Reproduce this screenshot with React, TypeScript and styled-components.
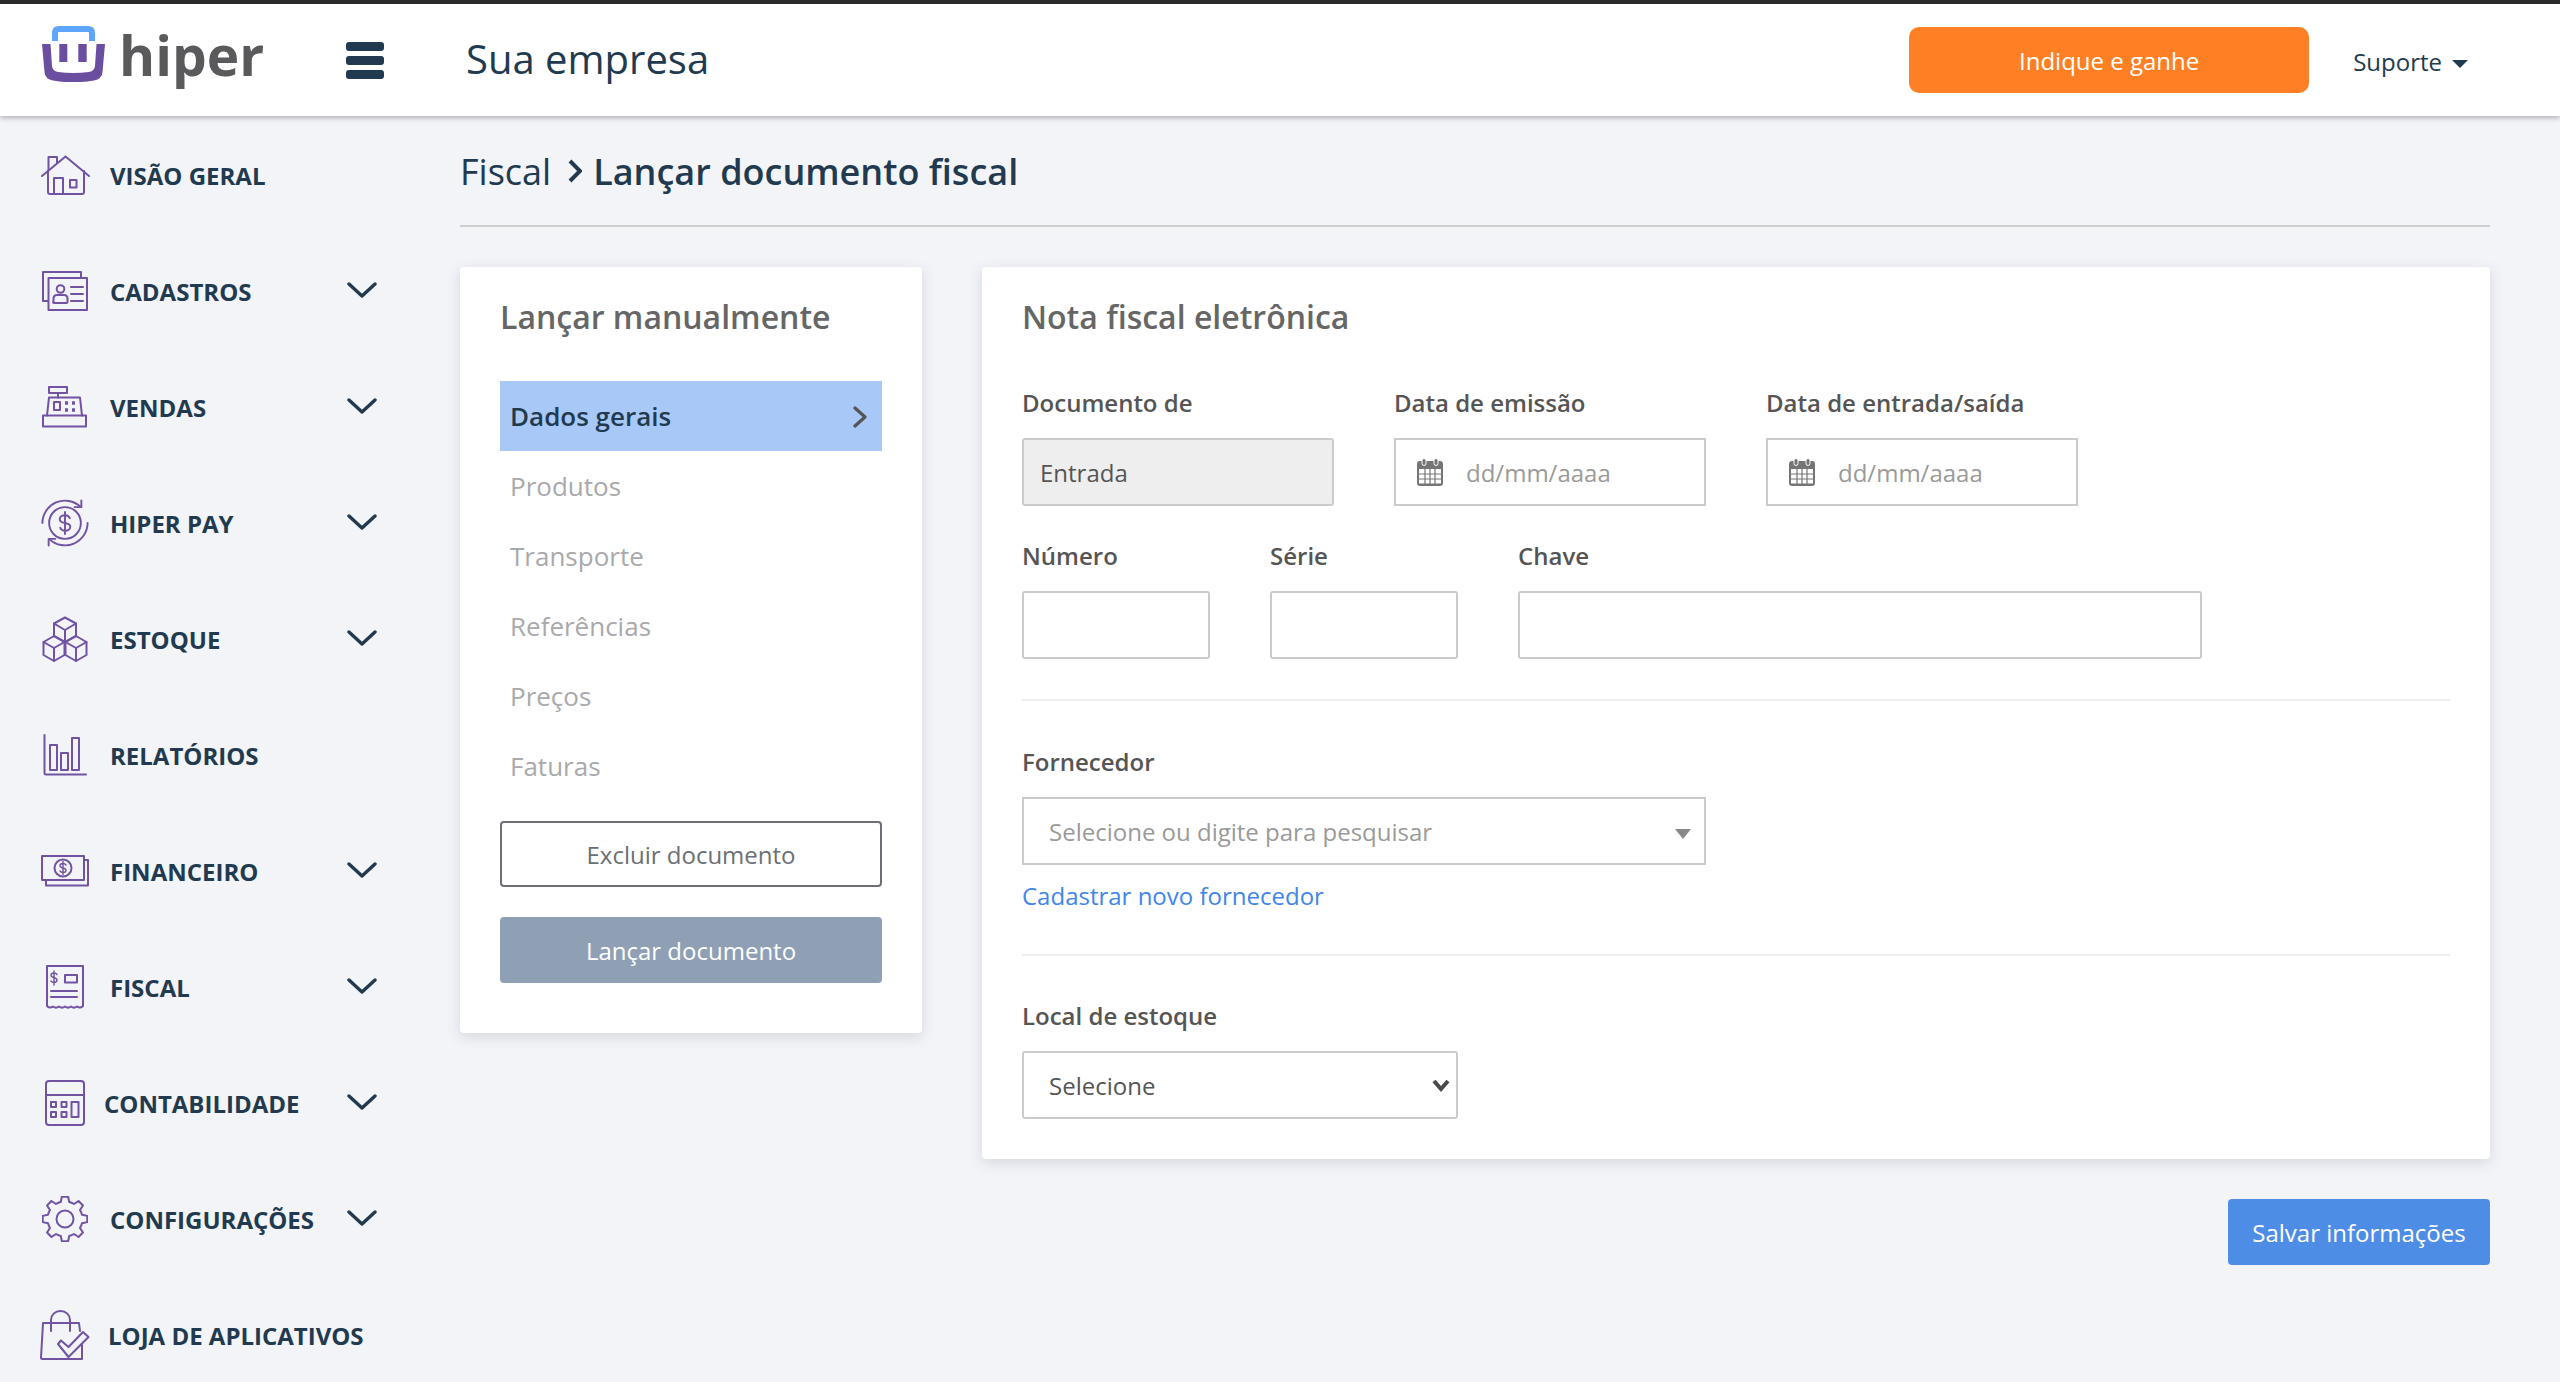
import React from "react";
import styled, { createGlobalStyle } from "styled-components";

const GlobalStyle = createGlobalStyle`
  html, body {
    margin: 0;
    padding: 0;
    height: 100%;
    background: #f2f4f8;
    font-family: "Open Sans", "Noto Sans", sans-serif;
    overflow: hidden;
  }
  * {
    box-sizing: border-box;
  }
`;

const Page = styled.div`
  width: 2560px;
  height: 1382px;
  overflow: hidden;
  display: flex;
  flex-direction: column;
`;

/* top bar */
const Topbar = styled.header`
  height: 116px;
  flex: none;
  background: #fff;
  border-top: 4px solid #2b2b2d;
  box-shadow: 0 2px 5px rgba(0, 0, 0, 0.28);
  display: flex;
  align-items: center;
  padding-left: 42px;
  padding-right: 92px;
  position: relative;
  z-index: 2;
`;

const Brand = styled.div`
  display: flex;
  align-items: center;
  gap: 14px;
  width: 304px;
  height: 100%;
  padding-bottom: 12px;
`;

const LogoSvg = styled.svg`
  width: 63px;
  height: 56px;
  flex: none;
`;

const BrandName = styled.span`
  font-size: 55px;
  line-height: 1;
  font-weight: 700;
  color: #5a5a5c;
`;

const Burger = styled.div`
  width: 38px;
  display: flex;
  flex-direction: column;
  gap: 5px;
  margin-right: 82px;
  span {
    display: block;
    height: 9px;
    border-radius: 3px;
    background: #223a4f;
  }
`;

const CompanyName = styled.div`
  font-size: 40px;
  color: #223a4f;
  flex: 1;
  margin-top: -4px;
`;

const ReferButton = styled.button`
  width: 400px;
  height: 66px;
  border: none;
  border-radius: 10px;
  background: #ff7f24;
  color: #fff;
  font: 400 24px "Open Sans", sans-serif;
`;

const SupportMenu = styled.div`
  margin-left: 44px;
  display: flex;
  align-items: center;
  gap: 10px;
  font-size: 24px;
  color: #223a4f;
  margin-top: 2px;
`;

const Caret = styled.span`
  width: 0;
  height: 0;
  margin-top: 5px;
  border-left: 8px solid transparent;
  border-right: 8px solid transparent;
  border-top: 8px solid #223a4f;
`;

/* body */
const Body = styled.div`
  flex: 1;
  display: flex;
  min-height: 0;
`;

const Sidebar = styled.nav`
  width: 460px;
  flex: none;
  padding-top: 1px;
`;

const MenuRow = styled.div`
  height: 116px;
  display: flex;
  align-items: center;
  padding-left: 40px;
  position: relative;
`;

const MenuIcon = styled.div`
  width: 50px;
  display: flex;
  justify-content: center;
  align-items: center;
  flex: none;
  svg {
    display: block;
    fill: none;
    stroke: #7152a3;
    stroke-width: 2;
    stroke-linejoin: round;
    stroke-linecap: round;
  }
`;

const MenuLabel = styled.span<{ $offset?: number }>`
  font-size: 24px;
  font-weight: 700;
  color: #223a4f;
  margin-left: ${(p) => p.$offset ?? 20}px;
  white-space: nowrap;
`;

const MenuChevron = styled.svg`
  position: absolute;
  left: 347px;
  top: 48px;
  width: 30px;
  height: 18px;
  fill: none;
  stroke: #223a4f;
  stroke-width: 3.4;
  stroke-linecap: round;
  stroke-linejoin: round;
`;

const Main = styled.main`
  flex: 1;
  padding: 0 70px 0 0;
  min-width: 0;
`;

const Breadcrumb = styled.div`
  height: 111px;
  display: flex;
  align-items: center;
  border-bottom: 2px solid #cdcecd;
  font-size: 36px;
  color: #223a4f;
  padding-top: 1px;
`;

const CrumbSeparator = styled.svg`
  width: 15px;
  height: 24px;
  margin: 0 11px 0 16px;
  fill: none;
  stroke: #223a4f;
  stroke-width: 4;
`;

const CrumbCurrent = styled.span`
  font-weight: 600;
`;

const Columns = styled.div`
  display: flex;
  align-items: flex-start;
  gap: 60px;
  margin-top: 40px;
`;

const Card = styled.section`
  background: #fff;
  border-radius: 4px;
  box-shadow: 0 4px 14px rgba(60, 70, 90, 0.16);
`;

const StepsCard = styled(Card)`
  width: 462px;
  height: 766px;
  padding: 28px 40px 0;
  flex: none;
`;

const FormCard = styled(Card)`
  flex: 1;
  height: 892px;
  padding: 28px 40px 0;
`;

const CardTitle = styled.h2`
  margin: 0;
  font-size: 32px;
  line-height: 44px;
  font-weight: 600;
  color: #666;
`;

const Steps = styled.ul`
  list-style: none;
  margin: 42px 0 0;
  padding: 0;
`;

const Step = styled.li<{ $active?: boolean }>`
  height: 70px;
  padding: 0 15px 0 10px;
  display: flex;
  align-items: center;
  justify-content: space-between;
  font-size: 26px;
  font-weight: ${(p) => (p.$active ? 600 : 400)};
  color: ${(p) => (p.$active ? "#223a4f" : "#a9a9ab")};
  background: ${(p) => (p.$active ? "#a8c8f8" : "transparent")};
`;

const StepChevron = styled.svg`
  width: 14px;
  height: 24px;
  margin-top: 2px;
  fill: none;
  stroke: #555;
  stroke-width: 3.2;
  stroke-linecap: round;
  stroke-linejoin: round;
`;

const StepActions = styled.div`
  margin-top: 20px;
  display: flex;
  flex-direction: column;
  gap: 30px;
`;

const OutlineButton = styled.button`
  height: 66px;
  border: 2px solid #6c6f75;
  border-radius: 4px;
  background: #fff;
  color: #6c6f75;
  font: 400 24px "Open Sans", sans-serif;
`;

const MutedButton = styled.button`
  height: 66px;
  border: none;
  border-radius: 4px;
  background: #8fa0b5;
  color: #fff;
  font: 400 24px "Open Sans", sans-serif;
`;

const FieldRow = styled.div<{ $top: number }>`
  display: flex;
  gap: 60px;
  margin-top: ${(p) => p.$top}px;
`;

const Field = styled.div<{ $width: number }>`
  width: ${(p) => p.$width}px;
  flex: none;
`;

const Label = styled.div`
  font-size: 24px;
  line-height: 34px;
  font-weight: 600;
  color: #555;
  margin-bottom: 18px;
`;

const InputBox = styled.div<{ $disabled?: boolean; $square?: boolean; $inset?: number }>`
  height: 68px;
  border: 2px solid #cbcbcb;
  border-radius: ${(p) => (p.$square ? 0 : 3)}px;
  background: ${(p) => (p.$disabled ? "#eeeeee" : "#fff")};
  color: #555;
  font-size: 24px;
  display: flex;
  align-items: center;
  padding-left: ${(p) => p.$inset ?? 16}px;
  gap: 23px;
  position: relative;
`;

const Placeholder = styled.span`
  color: #9a9a9a;
`;

const CalendarSvg = styled.svg`
  width: 26px;
  height: 28px;
  flex: none;
  margin-left: 5px;
`;

const Divider = styled.hr`
  border: none;
  border-top: 2px solid #eeeeee;
  margin: 40px 0 0;
`;

const SelectArrow = styled.span`
  position: absolute;
  right: 13px;
  top: 30px;
  width: 0;
  height: 0;
  border-left: 8px solid transparent;
  border-right: 8px solid transparent;
  border-top: 10px solid #888;
`;

const NativeChevron = styled.svg`
  position: absolute;
  right: 5px;
  top: 26px;
  width: 20px;
  height: 14px;
  fill: none;
  stroke: #4a4a4a;
  stroke-width: 4;
`;

const LinkText = styled.a`
  display: block;
  margin-top: 13px;
  font-size: 24px;
  line-height: 36px;
  color: #3f86e8;
`;

const Footer = styled.div`
  display: flex;
  justify-content: flex-end;
  margin-top: 40px;
`;

const SaveButton = styled.button`
  width: 262px;
  height: 66px;
  border: none;
  border-radius: 4px;
  background: #4e8de6;
  color: #fff;
  font: 400 24px "Open Sans", sans-serif;
`;

/* drawings */
const LogoMark = () => (
  <LogoSvg viewBox="0 0 63 56">
    <path d="M13 15V7q0-4 4-4h29q4 0 4 4v8" fill="none" stroke="#5ea5ff" strokeWidth="6" />
    <path
      d="M0 18h8.500L10 40q.5 5 6 6 15 2 31 0 5.500-1 6-6l1.500-22H63l-2.500 28q-.5 7-8.500 8.500-21 3.500-41 0-8-1.500-8.500-8.500z"
      fill="#6b4e9f"
    />
    <rect x="17.300" y="18" width="8" height="18" fill="#6b4e9f" />
    <rect x="36.300" y="18" width="8.400" height="18" fill="#6b4e9f" />
  </LogoSvg>
);

const HomeIcon = () => (
  <svg width="49" height="40" viewBox="0 0 49 40">
    <path d="M1 21 24.500 1.500 48 21" />
    <path d="M7.500 15V2h8.500v6" />
    <path d="M7 16v21c0 1 1 2 2 2h13V23h-9v16M22 39h19c1 0 2-1 2-2V16" />
    <rect x="29" y="25" width="6.500" height="7.500" />
  </svg>
);

const CardsIcon = () => (
  <svg width="46" height="40" viewBox="0 0 46 40">
    <path d="M6 30H1V1h38v6" />
    <rect x="6.500" y="7" width="38.500" height="32" />
    <circle cx="18.500" cy="18" r="3.800" />
    <path d="M11.500 31v-3.500c0-2 1.500-3.500 3.500-3.500h7c2 0 3.500 1.500 3.500 3.500V31c0 .5-.5 1-1 1h-12.500c-.5 0-1-.5-1-1z" />
    <path d="M29 16h12M29 23h12M29 30h12" />
  </svg>
);

const RegisterIcon = () => (
  <svg width="46" height="42" viewBox="0 0 46 42">
    <rect x="1" y="29.500" width="43" height="11" />
    <path d="M5 29.500 7 11.500h31l2 18" />
    <rect x="7" y="1" width="18" height="6" />
    <path d="M16 7v4.500" />
    <rect x="12" y="16" width="6" height="8" />
    <path d="M23 17h3M30 17h3M23 24h3M30 24h3" strokeWidth="3.400" strokeLinecap="butt" />
  </svg>
);

const PayIcon = () => (
  <svg width="52" height="50" viewBox="0 0 52 50">
    <path d="M2.500 25A23.500 23.500 0 0 1 42 8M49.500 25A23.500 23.500 0 0 1 10 42" />
    <path d="M43 1.500V8.500H36M9 48.500V41.500H16" />
    <circle cx="26" cy="25" r="16.500" />
    <path d="M31 20c-1-2-3-3-5-3-3 0-5.500 1.500-5.500 4s2.500 3.500 5.500 4 5.500 1.500 5.500 4-2.500 4-5.500 4c-2 0-4-1-5-3M26 13.500v23" />
  </svg>
);

const BoxesIcon = () => (
  <svg width="46" height="46" viewBox="0 0 46 46">
    <path d="M23 1.500 34 7.500v12.500l-11 6-11-6V7.500z" />
    <path d="M12 7.500 23 14l11-6.500M23 14v12" />
    <path d="M12 20 22.500 26v13L12 45 1.500 39V26z" />
    <path d="M1.500 26 12 32l10.500-6M12 32v13" />
    <path d="M34 20 44.500 26v13L34 45l-10.500-6V26z" />
    <path d="M23.500 26 34 32l10.500-6M34 32v13" />
  </svg>
);

const ChartIcon = () => (
  <svg width="44" height="42" viewBox="0 0 44 42">
    <path d="M1.500 1v38c0 1 .5 1.500 1.500 1.500h40" />
    <rect x="7" y="11" width="7" height="25" />
    <rect x="18" y="19" width="7" height="17" />
    <rect x="29" y="4" width="7" height="32" />
  </svg>
);

const MoneyIcon = () => (
  <svg width="48" height="32" viewBox="0 0 48 32">
    <rect x="1" y="1" width="42" height="24" />
    <path d="M5 25v5.500h42V5h-4" />
    <circle cx="22" cy="13" r="8.500" />
    <path d="M25 10c-.7-1-1.800-1.500-3-1.500-1.800 0-3 .9-3 2.200s1.200 1.900 3 2.300 3 1 3 2.300-1.200 2.200-3 2.200c-1.200 0-2.300-.5-3-1.500M22 6.500v13" strokeWidth="1.400" />
  </svg>
);

const ReceiptIcon = () => (
  <svg width="40" height="44" viewBox="0 0 40 44">
    <path d="M2 1h36v40c-2 2-4 2-6 .5-2 1.500-4 1.500-6 0-2 1.500-4 1.500-6 0-2 1.500-4 1.500-6 0-2 1.500-4 1.500-6 0-2 1.500-4 1.500-6-.5z" />
    <rect x="20" y="10" width="12" height="7.500" />
    <path d="M12 9.500c-.7-1-1.700-1.500-3-1.500-1.800 0-3 1-3 2.300s1.200 2 3 2.400 3 1.100 3 2.400S10.800 17.500 9 17.500c-1.300 0-2.300-.5-3-1.500M9 6v14" strokeWidth="1.400" />
    <path d="M6 26h26M6 32h26" />
  </svg>
);

const LedgerIcon = () => (
  <svg width="40" height="46" viewBox="0 0 40 46">
    <rect x="1" y="1" width="38" height="44" rx="3" />
    <path d="M1 15h38" />
    <rect x="6" y="22" width="5" height="5" />
    <rect x="16.500" y="22" width="5" height="5" />
    <rect x="6" y="32" width="5" height="5" />
    <rect x="16.500" y="32" width="5" height="5" />
    <rect x="26.500" y="22" width="7" height="15" />
  </svg>
);

const gearPath = () => {
  const at = (r: number, deg: number) => {
    const a = (deg * Math.PI) / 180;
    return `${(23 + r * Math.cos(a)).toFixed(2)} ${(23 + r * Math.sin(a)).toFixed(2)}`;
  };
  const inner = 17.5;
  const outer = 22.5;
  let d = `M${at(inner, -14)}`;
  for (let i = 0; i < 8; i++) {
    const c = i * 45;
    d += `L${at(outer, c - 8)}L${at(outer, c + 8)}L${at(inner, c + 14)}`;
    d += `A${inner} ${inner} 0 0 1 ${at(inner, c + 31)}`;
  }
  return d + "Z";
};

const GearIcon = () => (
  <svg width="46" height="46" viewBox="0 0 46 46">
    <path d={gearPath()} />
    <circle cx="23" cy="23" r="8.500" />
  </svg>
);

const BagIcon = () => (
  <svg width="50" height="50" viewBox="0 0 50 50">
    <path d="M27 49H2.500c-1 0-1.500-.5-1.500-1.500L3 13h36l1 8" />
    <path d="M27 49h15V35" />
    <path d="M11 21V10c0-5 4-9 9.500-9S30 5 30 10v11" />
    <path d="M18 34 21 30.500l7.500 6.500L43 22l5.500 5-20 20z" />
  </svg>
);

const CalendarGlyph = () => (
  <CalendarSvg viewBox="0 0 26 28">
    <rect x="0" y="3" width="26" height="25" rx="3" fill="#757575" />
    <path d="M2 11h22v14.500H2z" fill="#fff" />
    <path d="M2 16h22M2 21h22M8 11v15M13 11v15M18 11v15" stroke="#757575" strokeWidth="1.200" />
    <rect x="5" y="0.500" width="4" height="7" rx="2" fill="#757575" stroke="#fff" strokeWidth="1" />
    <rect x="17" y="0.500" width="4" height="7" rx="2" fill="#757575" stroke="#fff" strokeWidth="1" />
  </CalendarSvg>
);

const ChevronDown = () => (
  <MenuChevron viewBox="0 0 30 18">
    <path d="M2 3 15 15 28 3" />
  </MenuChevron>
);

const menu = [
  { label: "VISÃO GERAL", icon: <HomeIcon />, arrow: false },
  { label: "CADASTROS", icon: <CardsIcon />, arrow: true },
  { label: "VENDAS", icon: <RegisterIcon />, arrow: true },
  { label: "HIPER PAY", icon: <PayIcon />, arrow: true },
  { label: "ESTOQUE", icon: <BoxesIcon />, arrow: true },
  { label: "RELATÓRIOS", icon: <ChartIcon />, arrow: false },
  { label: "FINANCEIRO", icon: <MoneyIcon />, arrow: true },
  { label: "FISCAL", icon: <ReceiptIcon />, arrow: true },
  { label: "CONTABILIDADE", icon: <LedgerIcon />, arrow: true, offset: 14 },
  { label: "CONFIGURAÇÕES", icon: <GearIcon />, arrow: true },
  { label: "LOJA DE APLICATIVOS", icon: <BagIcon />, arrow: false, offset: 18 },
];

const steps = ["Dados gerais", "Produtos", "Transporte", "Referências", "Preços", "Faturas"];

const App = () => {
  return (
    <Page>
      <GlobalStyle />
      <Topbar>
        <Brand>
          <LogoMark />
          <BrandName>hiper</BrandName>
        </Brand>
        <Burger>
          <span />
          <span />
          <span />
        </Burger>
        <CompanyName>Sua empresa</CompanyName>
        <ReferButton>Indique e ganhe</ReferButton>
        <SupportMenu>
          Suporte
          <Caret />
        </SupportMenu>
      </Topbar>

      <Body>
        <Sidebar>
          {menu.map((item) => (
            <MenuRow key={item.label}>
              <MenuIcon>{item.icon}</MenuIcon>
              <MenuLabel $offset={item.offset}>{item.label}</MenuLabel>
              {item.arrow && <ChevronDown />}
            </MenuRow>
          ))}
        </Sidebar>

        <Main>
          <Breadcrumb>
            Fiscal
            <CrumbSeparator viewBox="0 0 15 24">
              <path d="M3 2 13 12 3 22" />
            </CrumbSeparator>
            <CrumbCurrent>Lançar documento fiscal</CrumbCurrent>
          </Breadcrumb>

          <Columns>
            <StepsCard>
              <CardTitle>Lançar manualmente</CardTitle>
              <Steps>
                {steps.map((step, i) => (
                  <Step key={step} $active={i === 0}>
                    {step}
                    {i === 0 && (
                      <StepChevron viewBox="0 0 14 24">
                        <path d="M2 3 12 12 2 21" />
                      </StepChevron>
                    )}
                  </Step>
                ))}
              </Steps>
              <StepActions>
                <OutlineButton>Excluir documento</OutlineButton>
                <MutedButton>Lançar documento</MutedButton>
              </StepActions>
            </StepsCard>

            <FormCard>
              <CardTitle>Nota fiscal eletrônica</CardTitle>
              <FieldRow $top={47}>
                <Field $width={312}>
                  <Label>Documento de</Label>
                  <InputBox $disabled>Entrada</InputBox>
                </Field>
                <Field $width={312}>
                  <Label>Data de emissão</Label>
                  <InputBox $square>
                    <CalendarGlyph />
                    <Placeholder>dd/mm/aaaa</Placeholder>
                  </InputBox>
                </Field>
                <Field $width={312}>
                  <Label>Data de entrada/saída</Label>
                  <InputBox $square>
                    <CalendarGlyph />
                    <Placeholder>dd/mm/aaaa</Placeholder>
                  </InputBox>
                </Field>
              </FieldRow>
              <FieldRow $top={33}>
                <Field $width={188}>
                  <Label>Número</Label>
                  <InputBox />
                </Field>
                <Field $width={188}>
                  <Label>Série</Label>
                  <InputBox />
                </Field>
                <Field $width={684}>
                  <Label>Chave</Label>
                  <InputBox />
                </Field>
              </FieldRow>
              <Divider />
              <FieldRow $top={44}>
                <Field $width={684}>
                  <Label>Fornecedor</Label>
                  <InputBox $square $inset={25}>
                    <Placeholder>Selecione ou digite para pesquisar</Placeholder>
                    <SelectArrow />
                  </InputBox>
                  <LinkText>Cadastrar novo fornecedor</LinkText>
                </Field>
              </FieldRow>
              <Divider />
              <FieldRow $top={43}>
                <Field $width={436}>
                  <Label>Local de estoque</Label>
                  <InputBox $inset={25}>
                    Selecione
                    <NativeChevron viewBox="0 0 20 14">
                      <path d="M3 2 10 10 17 2" />
                    </NativeChevron>
                  </InputBox>
                </Field>
              </FieldRow>
            </FormCard>
          </Columns>

          <Footer>
            <SaveButton>Salvar informações</SaveButton>
          </Footer>
        </Main>
      </Body>
    </Page>
  );
};

export default App;
